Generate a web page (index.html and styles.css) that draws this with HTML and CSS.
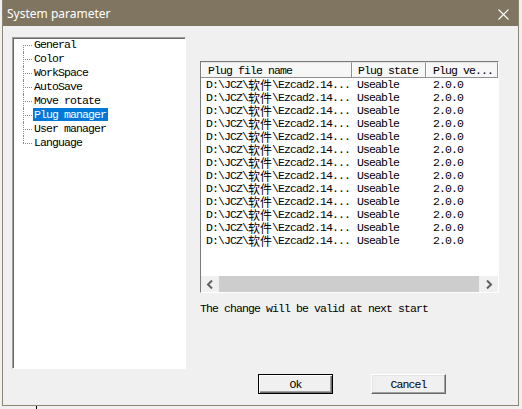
FILE: index.html
```
<!DOCTYPE html>
<html lang="en">
<head>
    <meta charset="UTF-8">
    <title>System parameter</title>
    <link rel="stylesheet" href="styles.css">
</head>
<body>
    <div class="window">
        <div class="titlebar">
            <span class="title">System parameter</span>
            <svg class="close" width="11" height="11" viewBox="0 0 11 11">
                <path d="M0.5 0.5 L10.5 10.5 M10.5 0.5 L0.5 10.5" stroke="#ffffff" stroke-width="1.1" fill="none"/>
            </svg>
        </div>

        <div class="client">
            <!-- left tree -->
            <div class="tree">
                <ul>
                    <li><span class="label">General</span></li>
                    <li><span class="label">Color</span></li>
                    <li><span class="label">WorkSpace</span></li>
                    <li><span class="label">AutoSave</span></li>
                    <li><span class="label">Move rotate</span></li>
                    <li><span class="label selected">Plug manager</span></li>
                    <li><span class="label">User manager</span></li>
                    <li><span class="label">Language</span></li>
                </ul>
            </div>

            <!-- plug page -->
            <div class="page">
                <div class="listbox">
                    <div class="lv-head">
                        <div class="hcell c1">Plug file name</div>
                        <div class="hcell c2">Plug state</div>
                        <div class="hcell c3">Plug ve...</div>
                    </div>
                    <div class="lv-rows">
                        <div class="row"><span class="cell c1">D:\JCZ\<span class="cjk">软件</span>\Ezcad2.14...</span><span class="cell c2">Useable</span><span class="cell c3">2.0.0</span></div>
                        <div class="row"><span class="cell c1">D:\JCZ\<span class="cjk">软件</span>\Ezcad2.14...</span><span class="cell c2">Useable</span><span class="cell c3">2.0.0</span></div>
                        <div class="row"><span class="cell c1">D:\JCZ\<span class="cjk">软件</span>\Ezcad2.14...</span><span class="cell c2">Useable</span><span class="cell c3">2.0.0</span></div>
                        <div class="row"><span class="cell c1">D:\JCZ\<span class="cjk">软件</span>\Ezcad2.14...</span><span class="cell c2">Useable</span><span class="cell c3">2.0.0</span></div>
                        <div class="row"><span class="cell c1">D:\JCZ\<span class="cjk">软件</span>\Ezcad2.14...</span><span class="cell c2">Useable</span><span class="cell c3">2.0.0</span></div>
                        <div class="row"><span class="cell c1">D:\JCZ\<span class="cjk">软件</span>\Ezcad2.14...</span><span class="cell c2">Useable</span><span class="cell c3">2.0.0</span></div>
                        <div class="row"><span class="cell c1">D:\JCZ\<span class="cjk">软件</span>\Ezcad2.14...</span><span class="cell c2">Useable</span><span class="cell c3">2.0.0</span></div>
                        <div class="row"><span class="cell c1">D:\JCZ\<span class="cjk">软件</span>\Ezcad2.14...</span><span class="cell c2">Useable</span><span class="cell c3">2.0.0</span></div>
                        <div class="row"><span class="cell c1">D:\JCZ\<span class="cjk">软件</span>\Ezcad2.14...</span><span class="cell c2">Useable</span><span class="cell c3">2.0.0</span></div>
                        <div class="row"><span class="cell c1">D:\JCZ\<span class="cjk">软件</span>\Ezcad2.14...</span><span class="cell c2">Useable</span><span class="cell c3">2.0.0</span></div>
                        <div class="row"><span class="cell c1">D:\JCZ\<span class="cjk">软件</span>\Ezcad2.14...</span><span class="cell c2">Useable</span><span class="cell c3">2.0.0</span></div>
                        <div class="row"><span class="cell c1">D:\JCZ\<span class="cjk">软件</span>\Ezcad2.14...</span><span class="cell c2">Useable</span><span class="cell c3">2.0.0</span></div>
                        <div class="row"><span class="cell c1">D:\JCZ\<span class="cjk">软件</span>\Ezcad2.14...</span><span class="cell c2">Useable</span><span class="cell c3">2.0.0</span></div>
                    </div>
                    <!-- horizontal scrollbar -->
                    <div class="hscroll">
                        <div class="arrow">
                            <svg width="8" height="9" viewBox="0 0 8 9"><path d="M6 0.5 L2 4.5 L6 8.5" stroke="#606060" stroke-width="2" fill="none"/></svg>
                        </div>
                        <div class="thumb"></div>
                        <div class="arrow">
                            <svg width="8" height="9" viewBox="0 0 8 9"><path d="M2 0.5 L6 4.5 L2 8.5" stroke="#606060" stroke-width="2" fill="none"/></svg>
                        </div>
                    </div>
                </div>

                <p class="note">The change will be valid at next start</p>

                <div class="buttons">
                    <button type="button" class="btn default">Ok</button>
                    <button type="button" class="btn">Cancel</button>
                </div>
            </div>
        </div>
    </div>
    <div class="under"><span class="tick"></span></div>
</body>
</html>
```

FILE: styles.css
```
html, body {
    margin: 0;
    padding: 0;
    background-color: #f0f0f0;
}
body {
    width: 522px;
    height: 409px;
    overflow: hidden;
    font-family: "Liberation Mono", "Noto Sans CJK SC", monospace;
    font-size: 11.5px;
    letter-spacing: -0.9px;
    color: #000;
}
.cjk {
    display: inline-block;
    vertical-align: top;
    height: 13px;
    line-height: 13px;
    font-family: "Noto Sans CJK SC", sans-serif;
    font-size: 12px;
    letter-spacing: 0;
}

/* window frame */
.window {
    margin-left: 2px;
    width: 517px;
    height: 406px;
    box-sizing: border-box;
    border: 1px solid #8d8473;
    border-top-color: #7f7560;
    background-color: #f0f0f0;
    display: flex;
    flex-direction: column;
}
.titlebar {
    height: 25px;
    flex: none;
    background-color: #7f7560;
    display: flex;
    align-items: center;
    justify-content: space-between;
    padding-left: 4px;
}
.title {
    font-family: "Noto Sans", sans-serif;
    font-size: 12px;
    letter-spacing: 0;
    color: #fff;
    margin-top: -1px;
}
.close {
    margin-right: 9px;
    margin-top: 1px;
}

.client {
    flex: 1;
    display: flex;
    padding: 11px 0 0 9px;
}

/* tree view */
.tree {
    width: 174px;
    height: 332px;
    box-sizing: border-box;
    background-color: #fff;
    border: 1px solid #fff;
    border-top-color: #a0a0a0;
    border-left-color: #a0a0a0;
    box-shadow: inset 1px 1px 0 #696969;
}
.tree ul {
    list-style: none;
    margin: 0;
    padding: 0 0 0 10px;
}
.tree li {
    position: relative;
    height: 14px;
    line-height: 14px;
    padding-left: 10px;
}
.tree li::before {
    content: '';
    position: absolute;
    left: 0;
    top: 7px;
    width: 9px;
    border-top: 1px dotted #8a8a8a;
}
.tree li::after {
    content: '';
    position: absolute;
    left: 0;
    top: 0;
    bottom: 0;
    border-left: 1px dotted #8a8a8a;
}
.tree li:first-child::after {
    top: 7px;
}
.tree li:last-child::after {
    bottom: 7px;
}
.label {
    display: inline-block;
    height: 13px;
    line-height: 13px;
    padding: 0 2px 0 1px;
}
.selected {
    background-color: #0078d7;
    color: #fff;
}

/* right page */
.page {
    margin-left: 14px;
    display: flex;
    flex-direction: column;
}
.listbox {
    margin-top: 24px;
    width: 299px;
    height: 232px;
    box-sizing: border-box;
    background-color: #fff;
    border: 1px solid #fff;
    border-top-color: #7a7a7a;
    border-left-color: #7a7a7a;
    display: flex;
    flex-direction: column;
}
.lv-head {
    display: flex;
    height: 16px;
    flex: none;
}
.hcell {
    box-sizing: border-box;
    height: 16px;
    line-height: 15px;
    background-color: #f7f7f7;
    border-top: 1px solid #e3e3e3;
    border-right: 1px solid #8f8f8f;
    border-bottom: 1px solid #8f8f8f;
    box-shadow: inset 1px 0 0 #fff;
    white-space: nowrap;
    overflow: hidden;
}
.hcell.c1 { width: 151px; padding-left: 7px; }
.hcell.c2 { width: 74px; padding-left: 6px; }
.hcell.c3 { width: 72px; padding-left: 7px; }

.lv-rows {
    flex: 1;
}
.row {
    display: flex;
    height: 13px;
    line-height: 13px;
    white-space: nowrap;
}
.cell {
    box-sizing: border-box;
    height: 13px;
}
.cell.c1 { width: 151px; padding-left: 5px; }
.cell.c2 { width: 74px; padding-left: 5px; }
.cell.c3 { width: 72px; padding-left: 7px; }

.hscroll {
    height: 16px;
    flex: none;
    display: flex;
    background-color: #f0f0f0;
}
.arrow {
    width: 18px;
    display: flex;
    align-items: center;
    justify-content: center;
}
.thumb {
    flex: 1;
    background-color: #cdcdcd;
    margin-right: 1px;
}

.note {
    margin: 10px 0 0 0;
    height: 12px;
    line-height: 12px;
}

.buttons {
    margin-top: 59px;
    margin-left: 58px;
    display: flex;
    gap: 38px;
}
.btn {
    width: 75px;
    height: 20px;
    padding: 0;
    font-family: "Liberation Mono", monospace;
    font-size: 11.5px;
    letter-spacing: -0.9px;
    color: #000;
    background-color: #f0f0f0;
    border: 1px solid;
    border-color: #fff #696969 #696969 #fff;
    box-shadow: inset -1px -1px 0 #a0a0a0, inset 1px 1px 0 #e3e3e3;
}
.btn.default {
    border: 1px solid #000;
    box-shadow: inset 1px 1px 0 #fff, inset -1px -1px 0 #696969, inset -2px -2px 0 #a0a0a0;
}

/* strip under the dialog */
.under {
    height: 3px;
    position: relative;
}
.tick {
    position: absolute;
    left: 36px;
    top: 0;
    width: 1px;
    height: 3px;
    background-color: #000;
}
```
